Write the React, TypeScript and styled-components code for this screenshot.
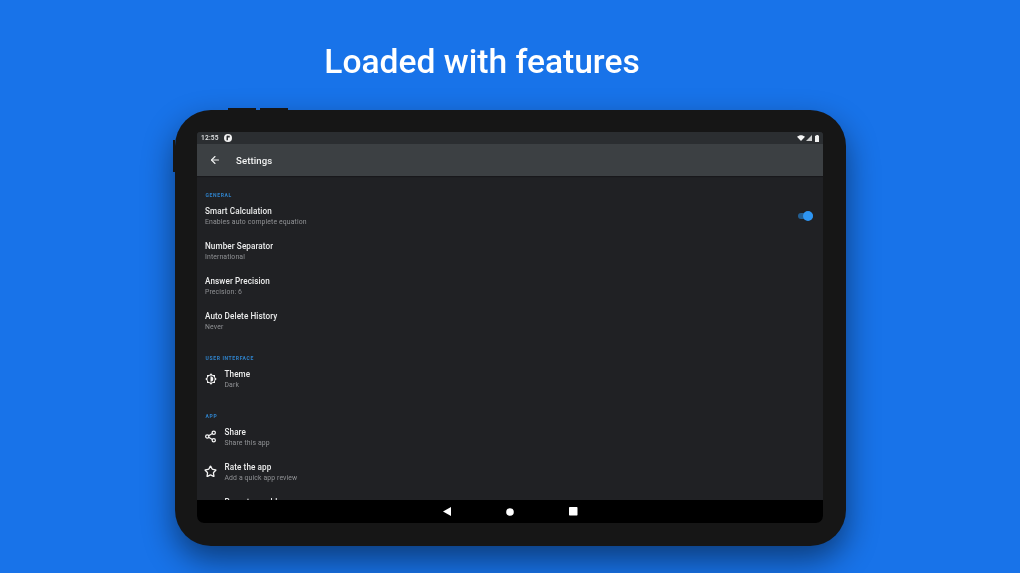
import React from "react";
import styled, { createGlobalStyle } from "styled-components";
import { ArrowLeft, Share2, Star } from "lucide-react";

const Global = createGlobalStyle`
  html, body { margin: 0; padding: 0; width: 1020px; height: 573px; overflow: hidden; background: #1873e9; }
  * { box-sizing: border-box; }
`;

const Page = styled.div`
  width: 1020px;
  height: 573px;
  background: #1873e9;
  font-family: Roboto, "Liberation Sans", sans-serif;
  display: flex;
  flex-direction: column;
  overflow: hidden;
`;

const Headline = styled.h1`
  margin: 0;
  height: 110px;
  padding: 41px 56px 0 0;
  text-align: center;
  font-size: 33.6px;
  font-weight: 500;
  line-height: 42px;
  color: #ffffff;
  filter: blur(0.35px);
`;

const Device = styled.div`
  position: relative;
  align-self: flex-start;
  margin-left: 175px;
  width: 671px;
  height: 436px;
  padding: 22px 23px 23px 22px;
  border-radius: 36px;
  background: #161616;
  box-shadow: 0 14px 32px rgba(0, 0, 0, 0.48);
`;

const HardButton = styled.span<{ $left: number }>`
  position: absolute;
  top: -2px;
  left: ${(p) => p.$left}px;
  width: 28px;
  height: 2px;
  background: #161616;
`;

const SideButton = styled.span`
  position: absolute;
  left: -2px;
  top: 30px;
  width: 2px;
  height: 32px;
  background: #161616;
`;

const Screen = styled.div`
  width: 626px;
  height: 391px;
  display: flex;
  flex-direction: column;
  border-radius: 3px 3px 7px 7px;
  overflow: hidden;
  background: #202124;
`;

const StatusBar = styled.div`
  flex: none;
  height: 12px;
  display: flex;
  align-items: center;
  justify-content: space-between;
  padding: 0 4px;
  background: #2b2e31;
  color: #e8eaeb;
  font-size: 6.6px;
  font-weight: 500;
  letter-spacing: 0.2px;
`;

const StatusLeft = styled.div`
  display: flex;
  align-items: center;
  gap: 5.5px;
  padding-top: 0.5px;
  filter: blur(0.3px);
`;

const StatusRight = styled.div`
  display: flex;
  align-items: center;
  gap: 1px;
`;

const Battery = styled.svg`
  margin-left: 2px;
`;

const Toolbar = styled.div`
  flex: none;
  height: 32px;
  display: flex;
  align-items: center;
  gap: 15px;
  padding-left: 12px;
  background: #3c4043;
  color: #f1f2f2;
  box-shadow: 0 1px 1px rgba(0, 0, 0, 0.25);
  z-index: 1;
`;

const ToolbarTitle = styled.div`
  font-size: 9.6px;
  font-weight: 500;
  letter-spacing: 0.1px;
  filter: blur(0.3px);
`;

const Content = styled.div`
  flex: 1;
  min-height: 0;
  overflow: hidden;
  padding-top: 16px;
`;

const SectionLabel = styled.div<{ $gap?: number }>`
  height: 6.5px;
  margin-top: ${(p) => p.$gap ?? 0}px;
  padding-left: 8.5px;
  color: #2f83cc;
  font-size: 5px;
  font-weight: 700;
  line-height: 6px;
  letter-spacing: 0.65px;
  text-transform: uppercase;
  filter: blur(0.25px);
`;

const Row = styled.div`
  height: 35px;
  display: flex;
  align-items: center;
  padding: 0 10px 0 8px;
`;

const IconSlot = styled.div`
  width: 19.5px;
  flex: none;
  display: flex;
  align-items: center;
  color: #f4f4f4;
`;

const RowIcon = styled.span`
  display: flex;
  margin-left: -1px;
`;

const RowText = styled.div`
  flex: 1;
  display: flex;
  flex-direction: column;
  gap: 2px;
  padding-top: 2px;
  filter: blur(0.3px);
`;

const RowTitle = styled.div`
  color: #eceded;
  font-size: 8.15px;
  font-weight: 500;
  line-height: 9px;
  letter-spacing: 0.1px;
`;

const RowSub = styled.div`
  color: #909295;
  font-size: 6.87px;
  line-height: 9px;
  letter-spacing: 0.12px;
`;

const Toggle = styled.div`
  position: relative;
  width: 15.5px;
  height: 6.5px;
  border-radius: 4px;
  background: #235f93;
`;

const Thumb = styled.span`
  position: absolute;
  right: 0;
  top: -1.75px;
  width: 10px;
  height: 10px;
  border-radius: 50%;
  background: #2e96f3;
`;

const NavBar = styled.div`
  flex: none;
  height: 23px;
  display: flex;
  align-items: center;
  justify-content: center;
  gap: 55px;
  padding-left: 0.5px;
  background: #000000;
`;

const settings = {
  general: [
    ["Smart Calculation", "Enables auto complete equation"],
    ["Number Separator", "International"],
    ["Answer Precision", "Precision: 6"],
    ["Auto Delete History", "Never"],
  ],
};

const ThemeIcon = () => (
  <svg width="12" height="12" viewBox="0 0 24 24">
    <path
      fill="currentColor"
      d="M20 15.3 23.3 12 20 8.7V4h-4.7L12 .7 8.7 4H4v4.7L.7 12 4 15.3V20h4.7l3.3 3.3 3.3-3.3H20v-4.7Z"
    />
    <circle cx="12" cy="12" r="7.2" fill="#202124" />
    <path d="M11 6.5a5.5 5.5 0 0 1 0 11V6.5Z" fill="currentColor" />
  </svg>
);

const AppBadge = () => (
  <svg width="8" height="8" viewBox="0 0 16 16">
    <circle cx="8" cy="8" r="8" fill="#f2f2f2" />
    <path d="M8 3.5h3.5V7H8v5.5H5V5.5a2 2 0 0 1 3-2Z" fill="#2b2e31" />
  </svg>
);

const StatusIcons = () => (
  <StatusRight>
    <svg width="8" height="6" viewBox="0 0 16 12" fill="#f6f6f6">
      <path d="M0 3.4C4.4-.8 11.6-.8 16 3.4L8 12 0 3.4Z" />
    </svg>
    <svg width="6" height="6" viewBox="0 0 12 12" fill="#cfd0d0">
      <path d="M12 0v12H0L12 0Z" />
    </svg>
    <Battery width="4.5" height="7" viewBox="0 0 9 14" fill="#f0f0f0">
      <path d="M2.5 0h4v1.5h2.5V14H0V1.5h2.5V0Z" />
    </Battery>
  </StatusRight>
);

const NavBack = () => (
  <svg width="8" height="9" viewBox="0 0 8 9" fill="#fff">
    <path d="M0 4.5 8 0v9L0 4.5Z" />
  </svg>
);
const NavHome = () => (
  <svg width="8" height="8" viewBox="0 0 8 8" fill="#fff">
    <circle cx="4" cy="4" r="3.8" />
  </svg>
);
const NavRecent = () => (
  <svg width="8.5" height="8.5" viewBox="0 0 8 8" fill="#fff">
    <rect width="8" height="8" rx="0.6" />
  </svg>
);

export default function App() {
  return (
    <Page>
      <Global />
      <Headline>Loaded with features</Headline>
      <Device>
        <HardButton $left={53} />
        <HardButton $left={85} />
        <SideButton />
        <Screen>
          <StatusBar>
            <StatusLeft>
              <span>12:55</span>
              <AppBadge />
            </StatusLeft>
            <StatusIcons />
          </StatusBar>
          <Toolbar>
            <ArrowLeft size={12} strokeWidth={2.2} />
            <ToolbarTitle>Settings</ToolbarTitle>
          </Toolbar>
          <Content>
            <SectionLabel>General</SectionLabel>
            {settings.general.map(([title, sub], i) => (
              <Row key={title}>
                <RowText>
                  <RowTitle>{title}</RowTitle>
                  <RowSub>{sub}</RowSub>
                </RowText>
                {i === 0 && (
                  <Toggle>
                    <Thumb />
                  </Toggle>
                )}
              </Row>
            ))}
            <SectionLabel $gap={16.5}>User Interface</SectionLabel>
            <Row>
              <IconSlot>
                <ThemeIcon />
              </IconSlot>
              <RowText>
                <RowTitle>Theme</RowTitle>
                <RowSub>Dark</RowSub>
              </RowText>
            </Row>
            <SectionLabel $gap={16}>App</SectionLabel>
            <Row>
              <IconSlot>
                <RowIcon>
                  <Share2 size={13} strokeWidth={2.3} />
                </RowIcon>
              </IconSlot>
              <RowText>
                <RowTitle>Share</RowTitle>
                <RowSub>Share this app</RowSub>
              </RowText>
            </Row>
            <Row>
              <IconSlot>
                <RowIcon>
                  <Star size={13} strokeWidth={2.4} />
                </RowIcon>
              </IconSlot>
              <RowText>
                <RowTitle>Rate the app</RowTitle>
                <RowSub>Add a quick app review</RowSub>
              </RowText>
            </Row>
            <Row>
              <IconSlot />
              <RowText>
                <RowTitle>Report a problem</RowTitle>
                <RowSub>Send feedback</RowSub>
              </RowText>
            </Row>
          </Content>
          <NavBar>
            <NavBack />
            <NavHome />
            <NavRecent />
          </NavBar>
        </Screen>
      </Device>
    </Page>
  );
}
